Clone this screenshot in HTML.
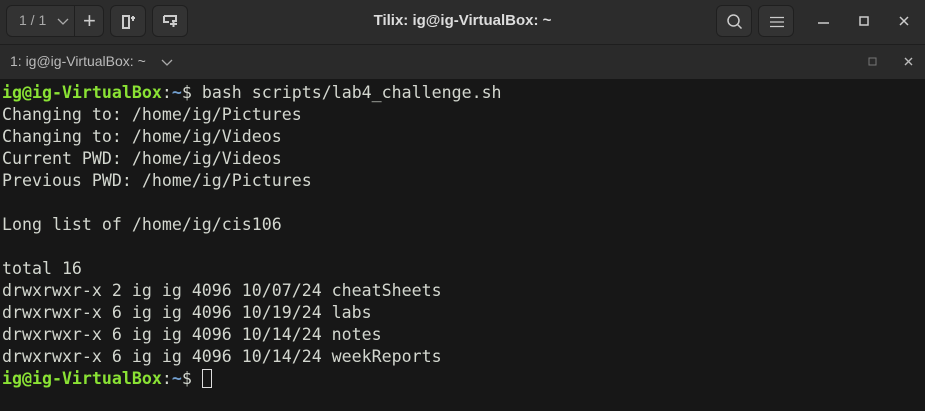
<!DOCTYPE html>
<html><head><style>
body{margin:0;width:925px;height:411px;overflow:hidden;background:#171717;font-family:"Liberation Sans",sans-serif}
.hdr{position:absolute;left:0;top:0;width:925px;height:44px;background:#2c2c2c;border-bottom:1px solid #1e1e1e}
.btn{position:absolute;top:5px;height:32px;background:#333;border:1px solid #1f1f1f;border-radius:6px;color:#ccc;box-sizing:border-box}
.title{position:absolute;left:0;width:925px;top:12px;text-align:center;color:#ddd;font-weight:bold;font-size:15px}
.tab{position:absolute;top:45px;left:0;width:925px;height:34px;background:#2a2a2a;color:#bbb;font-size:14px}
.term{position:absolute;top:82px;left:2px;font-family:"DejaVu Sans Mono","Liberation Mono",monospace;font-size:16.6px;line-height:22px;color:#d3d7cf;white-space:pre}
.g{color:#8ae234;font-weight:bold}.b{color:#729fcf;font-weight:bold}
.cur{display:inline-block;width:10px;height:19px;border:1px solid #ddd;vertical-align:-4px;box-sizing:border-box}
</style></head><body>
<div class="hdr">
 <div class="btn" style="left:6px;width:98px"><span style="position:absolute;left:12px;top:6px;font-size:14px;color:#aaa">1 / 1</span><svg style="position:absolute;left:50px;top:12px" width="12" height="8"><path d="M1 1l5 5 5-5" stroke="#aaa" fill="none" stroke-width="1.3"/></svg><div style="position:absolute;left:67px;top:0;width:1px;height:30px;background:#1f1f1f"></div><span style="position:absolute;left:76px;top:2px;font-size:22px;color:#ccc;font-weight:300">+</span></div>
 <div class="btn" style="left:110px;width:36px"><svg style="position:absolute;left:11px;top:8px" width="14" height="16"><path d="M1 2h6v12H1z" stroke="#ccc" fill="none" stroke-width="2"/><path d="M9 4h4M11 2v5" stroke="#ccc" stroke-width="2"/></svg></div>
 <div class="btn" style="left:152px;width:36px"><svg style="position:absolute;left:10px;top:9px" width="16" height="13"><path d="M1 1h12v5H9M1 1v6h5" stroke="#ccc" fill="none" stroke-width="2"/><path d="M7 9h7M10.5 6v6" stroke="#ccc" stroke-width="2"/></svg></div>
 <div class="title">Tilix: ig@ig-VirtualBox: ~</div>
 <div class="btn" style="left:716px;width:36px"><svg style="position:absolute;left:9px;top:7px" width="18" height="18"><circle cx="7.5" cy="7.5" r="5.5" stroke="#ccc" fill="none" stroke-width="1.5"/><path d="M11.5 11.5l4 4" stroke="#ccc" stroke-width="1.5"/></svg></div>
 <div class="btn" style="left:758px;width:36px"><svg style="position:absolute;left:10px;top:10px" width="16" height="12"><path d="M1 1.5h14M1 6h14M1 10.5h14" stroke="#ccc" stroke-width="1.3"/></svg></div>
 <svg style="position:absolute;left:818px;top:22px" width="12" height="3"><path d="M0 1h11" stroke="#ccc" stroke-width="1.5"/></svg>
 <svg style="position:absolute;left:859px;top:16px" width="10" height="10"><rect x="1" y="1" width="8" height="8" stroke="#ccc" fill="none" stroke-width="1.5"/></svg>
 <svg style="position:absolute;left:899px;top:16px" width="10" height="10"><path d="M1 1l8 8M9 1l-8 8" stroke="#ccc" stroke-width="1.5"/></svg>
</div>
<div class="tab"><span style="position:absolute;left:10px;top:8px">1: ig@ig-VirtualBox: ~</span><svg style="position:absolute;left:161px;top:14px" width="12" height="8"><path d="M1 1l5 5 5-5" stroke="#aaa" fill="none" stroke-width="1.3"/></svg>
<svg style="position:absolute;left:868px;top:12px" width="10" height="10"><rect x="1" y="1" width="7" height="7" stroke="#777" fill="none" stroke-width="1"/></svg>
<svg style="position:absolute;left:904px;top:12px" width="10" height="10"><path d="M1 1l7 7M8 1l-7 7" stroke="#bbb" stroke-width="1.4"/></svg></div>
<div class="term"><span class="g">ig@ig-VirtualBox</span>:<span class="b">~</span>$ bash scripts/lab4_challenge.sh
Changing to: /home/ig/Pictures
Changing to: /home/ig/Videos
Current PWD: /home/ig/Videos
Previous PWD: /home/ig/Pictures

Long list of /home/ig/cis106

total 16
drwxrwxr-x 2 ig ig 4096 10/07/24 cheatSheets
drwxrwxr-x 6 ig ig 4096 10/19/24 labs
drwxrwxr-x 6 ig ig 4096 10/14/24 notes
drwxrwxr-x 6 ig ig 4096 10/14/24 weekReports
<span class="g">ig@ig-VirtualBox</span>:<span class="b">~</span>$ <span class="cur"></span></div>
</body></html>
